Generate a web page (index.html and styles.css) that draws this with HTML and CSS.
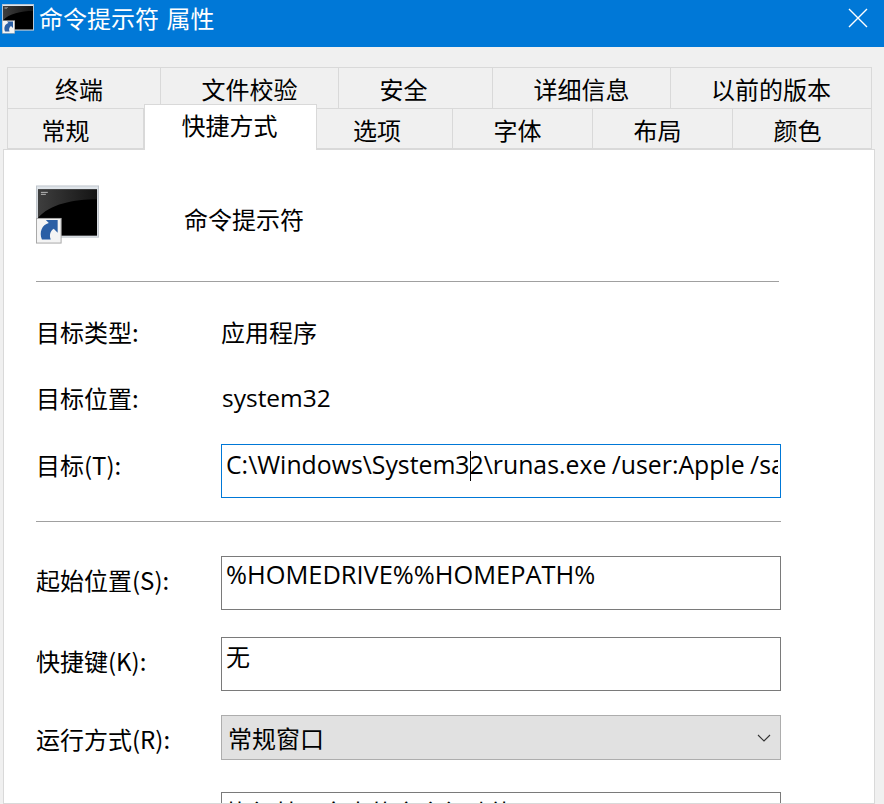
FILE: index.html
```html
<!DOCTYPE html>
<html lang="zh-CN">

<head>
    <meta charset="UTF-8">
    <title>命令提示符 属性</title>
    <link rel="stylesheet" href="styles.css">
</head>

<body>
    <svg class="defs" width="0" height="0">
        <defs>
            <linearGradient id="shine" x1="0" y1="0" x2="1" y2="0">
                <stop offset="0" stop-color="#3e3e3e"/>
                <stop offset="1" stop-color="#141414"/>
            </linearGradient>
            <symbol id="cmd-icon" viewBox="0 0 64 60">
                <rect x="0.5" y="0.5" width="63" height="52" fill="#dfe4e9" stroke="#c0c6cc"/>
                <rect x="2" y="4" width="60" height="47" fill="#000"/>
                <path d="M2 4H62V14C38 14 14 19 2 33Z" fill="url(#shine)"/>
                <path d="M5 7H12M5 9H10" stroke="#b8b8b8" stroke-width="1"/>
                <rect x="0.5" y="33.5" width="25" height="25" fill="#f4f4f4" stroke="#a8a8a8"/>
                <path d="M6 55C3 47 6 40 13 38L10 35H22V48L18 44C15 46 13 50 15 55Z" fill="#2b5fa5"/>
            </symbol>
        </defs>
    </svg>

    <header class="titlebar">
        <svg class="title-icon"><use href="#cmd-icon"/></svg>
        <div class="title-text">命令提示符 属性</div>
        <svg class="close" viewBox="0 0 20 20">
            <path d="M1 1L19 19M19 1L1 19" stroke="#fff" stroke-width="1.4" fill="none"/>
        </svg>
    </header>

    <div class="tabs">
        <div class="tab-row back">
            <div class="tab w154 pr10">终端</div>
            <div class="tab w178">文件校验</div>
            <div class="tab w154 pr24">安全</div>
            <div class="tab w178">详细信息</div>
            <div class="tab w201">以前的版本</div>
        </div>
        <div class="tab-row">
            <div class="tab w137 pr20">常规</div>
            <div class="tab w173 active">快捷方式</div>
            <div class="tab w136 pr15">选项</div>
            <div class="tab w140 pr10">字体</div>
            <div class="tab w140 pr10">布局</div>
            <div class="tab w139 pr9">颜色</div>
        </div>
    </div>

    <section class="panel">
        <div class="head-row">
            <svg class="big-icon"><use href="#cmd-icon"/></svg>
            <div class="app-name">命令提示符</div>
        </div>
        <div class="line first"></div>

        <div class="row info type-row">
            <label>目标类型:</label>
            <div class="value">应用程序</div>
        </div>
        <div class="row info place-row">
            <label>目标位置:</label>
            <div class="value latin">system32</div>
        </div>
        <div class="row field target-row">
            <label>目标(T):</label>
            <div class="input focused">
                <span class="clip">C:\Windows\System3<span class="caret"></span>2\runas.exe /user:Apple /sa</span>
            </div>
        </div>
        <div class="line second"></div>

        <div class="row field start-row">
            <label>起始位置(S):</label>
            <div class="input path">%HOMEDRIVE%%HOMEPATH%</div>
        </div>
        <div class="row field key-row">
            <label>快捷键(K):</label>
            <div class="input cjk">无</div>
        </div>
        <div class="row field run-row">
            <label>运行方式(R):</label>
            <div class="select">
                <span>常规窗口</span>
                <svg class="chevron" viewBox="0 0 14 8">
                    <path d="M1 1L7 7L13 1" stroke="#333" stroke-width="1.1" fill="none"/>
                </svg>
            </div>
        </div>
        <div class="row field note-row">
            <label></label>
            <div class="input cjk tall">执行基于文本的命令行功能。</div>
        </div>
    </section>
</body>

</html>
```

FILE: styles.css
```css
html, body {
    height: 804px;
    overflow: hidden;
}

body {
    margin: 0;
    background: #f0f0f0;
    color: #000;
    font-family: "Open Sans", "Noto Sans CJK SC", sans-serif;
    font-size: 24px;
}

.defs {
    display: block;
    height: 0;
}

.titlebar {
    height: 47px;
    background: #0078d7;
    color: #fff;
    display: flex;
    align-items: flex-start;
}

.title-icon {
    width: 32px;
    height: 30px;
    margin: 4px 0 0 2px;
    flex: none;
}

.title-text {
    margin-left: 5px;
    line-height: 35px;
    word-spacing: 2px;
    white-space: nowrap;
    flex: 1;
    font-family: "Noto Sans CJK SC", sans-serif;
}

.close {
    width: 20px;
    height: 20px;
    margin: 8px 16px 0 0;
    flex: none;
}

.tabs {
    padding: 20px 0 0 7px;
    width: 865px;
}

.tab-row {
    display: flex;
    height: 41px;
}

.tab {
    box-sizing: border-box;
    background: #f0f0f0;
    border: 1px solid #d9d9d9;
    border-left: none;
    text-align: center;
    line-height: 42px;
    font-family: "Noto Sans CJK SC", sans-serif;
    flex: none;
}

.tab:first-child {
    border-left: 1px solid #d9d9d9;
}

.tab-row.back .tab {
    border-bottom: none;
}

.w136 { width: 136px; }
.w137 { width: 137px; }
.w139 { width: 139px; }
.w140 { width: 140px; }
.w154 { width: 154px; }
.w173 { width: 173px; }
.w178 { width: 178px; }
.w201 { width: 201px; }

/* labels in the real dialog don't sit centred in their tab */
.pr9 { padding-right: 9px; }
.pr10 { padding-right: 10px; }
.pr15 { padding-right: 15px; }
.pr20 { padding-right: 20px; }
.pr24 { padding-right: 24px; }

.tab.active {
    background: #fff;
    height: 46px;
    margin-top: -4px;
    padding-right: 2px;
    border-left: 1px solid #d9d9d9;
    border-bottom: none;
    position: relative;
    z-index: 2;
    line-height: 40px;
}

.panel {
    box-sizing: border-box;
    width: 872px;
    height: 655px;
    margin: 0 0 0 3px;
    padding: 0 0 0 32px;
    background: #fff;
    border: 1px solid #d9d9d9;
    overflow: hidden;
}

.head-row {
    display: flex;
    align-items: center;
    height: 131px;
}

.big-icon {
    width: 63px;
    height: 60px;
    margin-bottom: 2px;
    flex: none;
}

.app-name {
    margin-left: 85px;
    margin-top: 5px;
    font-family: "Noto Sans CJK SC", sans-serif;
}

.line {
    height: 1px;
    background: #a0a0a0;
}

.line.first {
    width: 743px;
}

.line.second {
    width: 745px;
    margin-top: 23px;
}

.row {
    display: flex;
    align-items: flex-start;
}

.row label {
    width: 185px;
    flex: none;
    white-space: nowrap;
    font-family: "Noto Sans CJK SC", sans-serif;
}

.info {
    height: 36px;
    line-height: 36px;
}

.type-row {
    margin-top: 32px;
}

.place-row {
    margin-top: 30px;
}

.value {
    font-family: "Noto Sans CJK SC", sans-serif;
}

.value.latin {
    font-family: "Open Sans", sans-serif;
    font-size: 24.5px;
    margin-left: 1px;
}

.field label {
    line-height: 36px;
}

.target-row {
    margin-top: 28px;
}

.target-row label {
    margin-top: 3px;
}

.start-row {
    margin-top: 34px;
}

.start-row label {
    margin-top: 6px;
}

.key-row {
    margin-top: 27px;
}

.key-row label {
    margin-top: 6px;
}

.run-row {
    margin-top: 24px;
}

.run-row label {
    margin-top: 6px;
}

.note-row {
    margin-top: 32px;
}

.input {
    box-sizing: border-box;
    width: 560px;
    height: 54px;
    padding: 0 4px;
    border: 1px solid #7a7a7a;
    font-size: 24.8px;
    line-height: 39px;
    word-spacing: -1px;
    white-space: nowrap;
    overflow: hidden;
    flex: none;
}

.input.path {
    font-size: 25.4px;
    line-height: 35px;
}

.input.cjk {
    font-family: "Noto Sans CJK SC", sans-serif;
    font-size: 24px;
    line-height: 35px;
}

.input.focused {
    border-color: #0078d7;
}

.input.tall {
    height: 80px;
    line-height: 38px;
}

.clip {
    display: block;
    width: 552px;
    overflow: hidden;
}

.caret {
    display: inline-block;
    width: 1px;
    height: 30px;
    background: #000;
    vertical-align: -7px;
    margin-right: -1px;
}

.select {
    box-sizing: border-box;
    width: 560px;
    height: 45px;
    padding: 0 6px;
    background: #e1e1e1;
    border: 1px solid #adadad;
    display: flex;
    align-items: center;
    justify-content: space-between;
    font-family: "Noto Sans CJK SC", sans-serif;
    flex: none;
}

.chevron {
    width: 14px;
    height: 8px;
    margin-right: 3px;
}
```
